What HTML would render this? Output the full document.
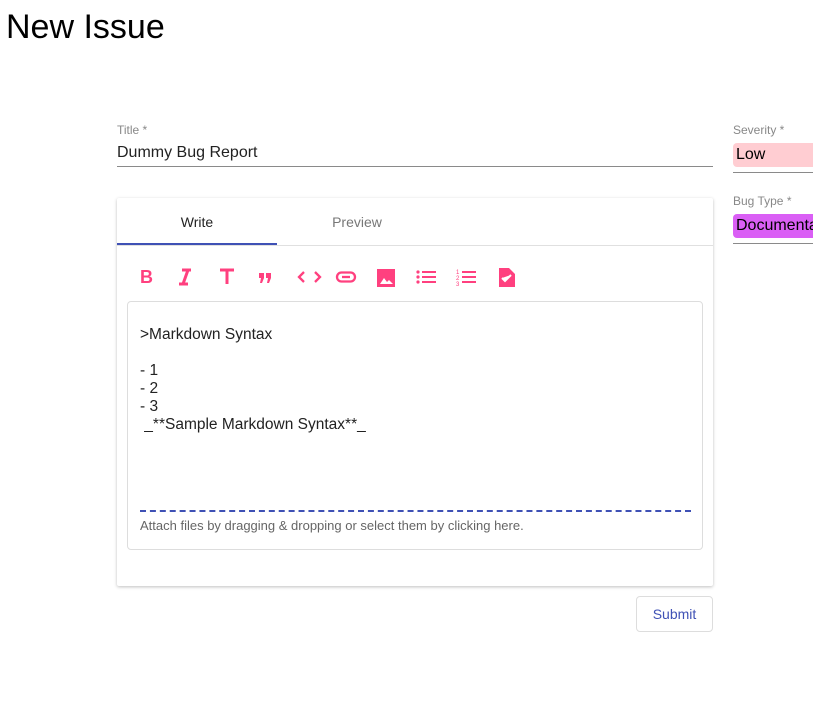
<!DOCTYPE html>
<html><head><style>
body{margin:0;width:813px;height:715px;overflow:hidden;background:#fff;font-family:"Liberation Sans",Arial,sans-serif;position:relative}
.a{position:absolute}
h1{position:absolute;left:6px;top:8px;margin:0;font-weight:400;font-size:34px;color:#000}
.lbl{font-size:12px;color:#888}
svg{position:absolute}
</style></head><body>
<h1>New Issue</h1>
<div class="a lbl" style="left:117px;top:123px">Title *</div>
<div class="a" style="left:117px;top:144px;font-size:16px;color:#222">Dummy Bug Report</div>
<div class="a" style="left:117px;top:166px;width:596px;height:1px;background:#8a8a8a"></div>

<div class="a lbl" style="left:733px;top:123px">Severity *</div>
<div class="a" style="left:733px;top:143px;width:90px;height:24px;background:#ffcdd2;border-radius:4px 0 0 4px"></div>
<div class="a" style="left:736px;top:146px;font-size:16px;color:#000">Low</div>
<div class="a" style="left:733px;top:172px;width:80px;height:1px;background:#8a8a8a"></div>
<div class="a lbl" style="left:733px;top:194px">Bug Type *</div>
<div class="a" style="left:733px;top:214px;width:90px;height:24px;background:#da5ff5;border-radius:4px 0 0 4px"></div>
<div class="a" style="left:736px;top:217px;font-size:16px;color:#000;white-space:nowrap">Documentation</div>
<div class="a" style="left:733px;top:243px;width:80px;height:1px;background:#8a8a8a"></div>

<div class="a" style="left:117px;top:198px;width:596px;height:388px;background:#fff;box-shadow:0 1px 3px rgba(0,0,0,.25);border-radius:2px"></div>
<div class="a" style="left:117px;top:214px;width:160px;text-align:center;font-size:14px;color:#222">Write</div>
<div class="a" style="left:277px;top:214px;width:160px;text-align:center;font-size:14px;color:#777">Preview</div>
<div class="a" style="left:117px;top:245px;width:596px;height:1px;background:#e0e0e0"></div>
<div class="a" style="left:117px;top:243px;width:160px;height:2px;background:#3f51b5"></div>

<svg width="400" height="24" style="left:135px;top:265px" fill="#ff407f" stroke="#ff407f">
<text x="5" y="18" font-family="Liberation Sans" font-weight="bold" font-size="18" stroke="none">B</text>
<path d="M47 5h9M44 19h9M53 5l-5 14" stroke-width="3" fill="none"/>
<path d="M85 5h14M92 5v14" stroke-width="3" fill="none"/>
<path d="M124 8h5v5l-2 5h-2l1-5h-2zM131 8h5v5l-2 5h-2l1-5h-2z" stroke="none"/>
<path d="M169 7l-5 5 5 5M180 7l5 5-5 5" stroke-width="2.3" fill="none"/>
<rect x="202" y="7.5" width="18" height="9" rx="4.5" stroke-width="2.3" fill="none"/><path d="M207 12h8" stroke="#fff" stroke-width="3"/><path d="M207 12h8" stroke-width="2.3"/>
<path d="M242 4h18v18h-18zM245 19l4-6 3 4 2-2 4 4z" stroke="none" fill-rule="evenodd"/>
<path d="M287 7h14M287 12h14M287 17h14" stroke-width="2" fill="none"/><circle cx="283" cy="7" r="1.6" stroke="none"/><circle cx="283" cy="12" r="1.6" stroke="none"/><circle cx="283" cy="17" r="1.6" stroke="none"/>
<path d="M327 7h14M327 12h14M327 17h14" stroke-width="2" fill="none"/><text x="321" y="9" font-size="6" stroke="none">1</text><text x="321" y="15" font-size="6" stroke="none">2</text><text x="321" y="21" font-size="6" stroke="none">3</text>
<path d="M364 3h10l6 6v13h-16zM367 13l3 3 6-6" stroke="none" fill-rule="evenodd"/><path d="M367 13l3 3 6-6" stroke="#fff" stroke-width="2" fill="none"/>
</svg>

<div class="a" style="left:127px;top:301px;width:574px;height:247px;border:1px solid #ddd;border-radius:4px"></div>
<div class="a" style="left:140px;top:326px;font-size:15.5px;line-height:18px;color:#222;white-space:pre">&gt;Markdown Syntax

- 1
- 2
- 3
 _**Sample Markdown Syntax**_</div>
<div class="a" style="left:140px;top:510px;width:551px;border-top:2px dashed #3f51b5"></div>
<div class="a" style="left:140px;top:518px;font-size:13px;color:#666">Attach files by dragging &amp; dropping or select them by clicking here.</div>

<div class="a" style="left:636px;top:596px;width:75px;height:34px;border:1px solid #ddd;border-radius:4px;text-align:center;line-height:34px;font-size:14px;color:#3f51b5">Submit</div>
</body></html>
